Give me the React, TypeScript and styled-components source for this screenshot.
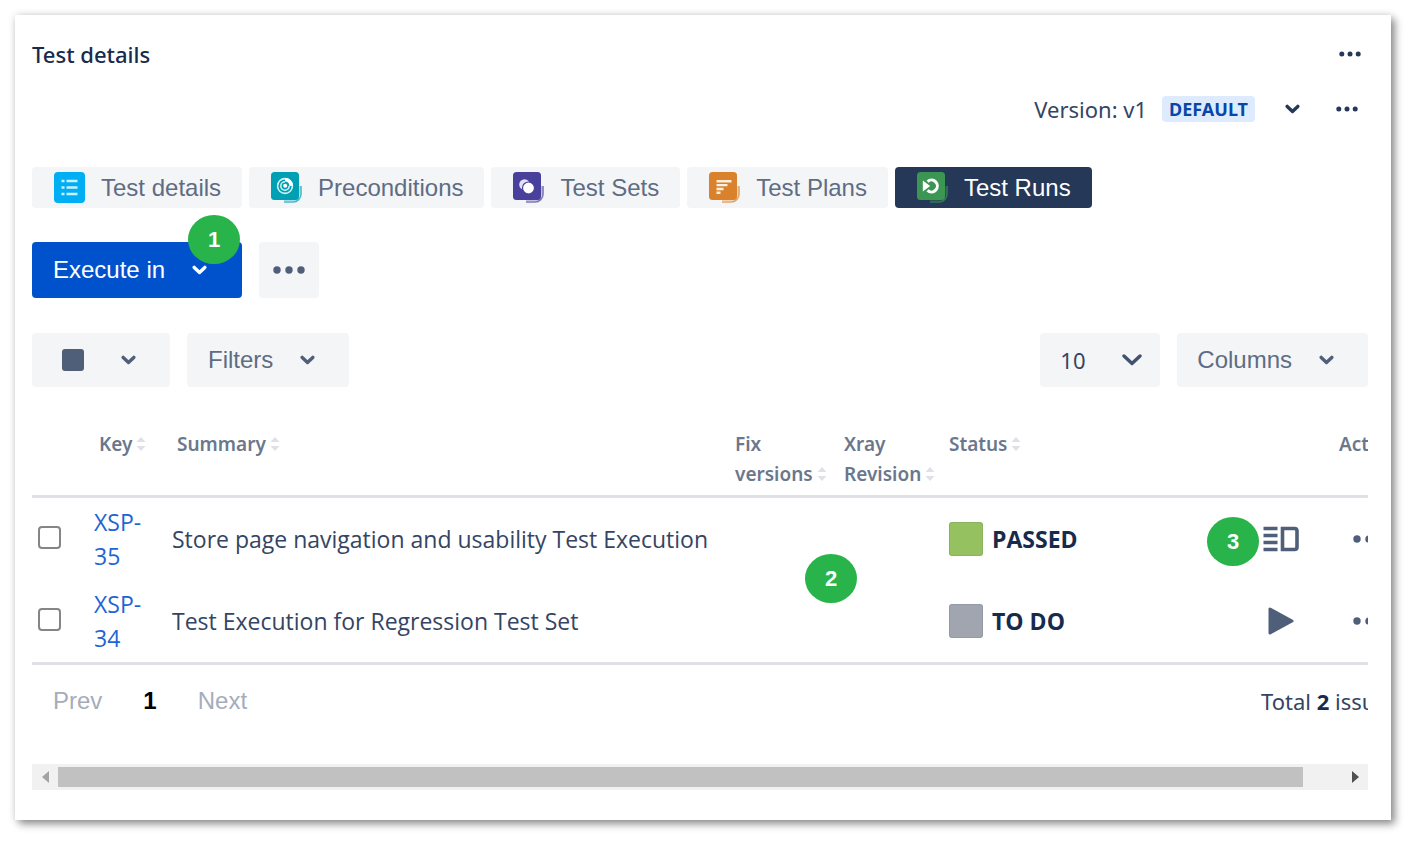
import React from "react";
import styled, { createGlobalStyle } from "styled-components";

const ui = `"Noto Sans", "Open Sans", sans-serif`;
const cell = `"Open Sans", "Noto Sans", sans-serif`;
const control = `"Liberation Sans", Arial, sans-serif`;

const GlobalStyle = createGlobalStyle`
  *, *::before, *::after { box-sizing: border-box; }
  body { margin: 0; background: #fff; font-family: ${ui}; color: #172b4d; }
  button, select { font-family: ${control}; }
  svg { display: block; flex: none; }
`;

const Page = styled.div`
  padding: 15px 25px 25px 15px;
`;

const Card = styled.main`
  padding: 23px 23px 30px 17px;
  background: #fff;
  box-shadow: 4px 4px 8px rgba(0, 0, 0, 0.42), 0 0 8px rgba(0, 0, 0, 0.12);
`;

const Header = styled.header`
  display: flex;
  align-items: center;
  justify-content: space-between;
  height: 32px;
  padding-right: 7px;
`;

const Title = styled.h1`
  margin: 0;
  font-size: 22px;
  line-height: 32px;
  font-weight: 500;
`;

const IconButton = styled.button`
  display: flex;
  align-items: center;
  justify-content: center;
  padding: 0;
  border: 0;
  background: none;
  color: #253858;
`;

const VersionRow = styled.div`
  display: flex;
  align-items: center;
  justify-content: flex-end;
  height: 32px;
  margin-top: 23px;
  padding-right: 10px;
`;

const VersionText = styled.span`
  font-size: 22px;
  line-height: 32px;
  color: #344563;
`;

const Lozenge = styled.span`
  margin: 0 30px 0 15px;
  padding: 0 7px;
  border-radius: 4px;
  background: #deebff;
  color: #0747a6;
  font-size: 18px;
  line-height: 26px;
  font-weight: 700;
`;

const VersionMore = styled(IconButton)`
  margin-left: 36px;
`;

const Tabs = styled.nav`
  display: flex;
  gap: 7px;
  margin-top: 42px;
`;

const Tab = styled.button<{ $active?: boolean }>`
  display: flex;
  align-items: center;
  gap: 16px;
  height: 41px;
  padding: 0 21px 0 22px;
  border: 0;
  border-radius: 4px;
  background: ${(p) => (p.$active ? "#253858" : "#f4f5f7")};
  color: ${(p) => (p.$active ? "#fff" : "#5e6c84")};
  font-size: 24px;
  white-space: nowrap;
`;

const ActionBar = styled.div`
  display: flex;
  gap: 17px;
  margin-top: 34px;
`;

const Anchor = styled.div`
  position: relative;
`;

const PrimaryButton = styled.button`
  display: flex;
  align-items: center;
  gap: 27px;
  height: 56px;
  padding: 0 35px 0 21px;
  border: 0;
  border-radius: 4px;
  background: #0052cc;
  color: #fff;
  font-size: 24px;
`;

const MoreButton = styled(IconButton)`
  width: 60px;
  height: 56px;
  border-radius: 4px;
  background: #f4f5f7;
  color: #505f79;
`;

const Marker = styled.span<{ $x: number; $y: number }>`
  position: absolute;
  z-index: 1;
  left: ${(p) => p.$x}px;
  top: ${(p) => p.$y}px;
  width: 52px;
  height: 49px;
  border-radius: 50%;
  background: #28b44b;
  color: #fff;
  font: 700 22px/49px ${control};
  text-align: center;
`;

const Toolbar = styled.div`
  display: flex;
  justify-content: space-between;
  margin-top: 35px;
`;

const Group = styled.div`
  display: flex;
  gap: 17px;
`;

const DropButton = styled.button<{ $inset?: number; $gap?: number }>`
  display: flex;
  align-items: center;
  gap: ${(p) => p.$gap ?? 27}px;
  height: 54px;
  padding: 0 34px 0 ${(p) => p.$inset ?? 21}px;
  border: 0;
  border-radius: 4px;
  background: #f4f5f7;
  color: #5e6c84;
  font-size: 24px;
  & > svg { color: #505f79; }
`;

const SelectBox = styled.label`
  display: grid;
  align-items: center;
  width: 120px;
  height: 54px;
  border-radius: 4px;
  background: #f4f5f7;
  color: #42526e;
  & > * { grid-area: 1 / 1; }
  & > svg { justify-self: end; margin-right: 18px; pointer-events: none; }
`;

const Select = styled.select`
  appearance: none;
  width: 100%;
  height: 54px;
  padding: 0 0 0 20px;
  border: 0;
  background: none;
  color: #344563;
  font-family: ${ui};
  font-size: 22px;
`;

const Scroller = styled.div`
  overflow: hidden;
  margin-top: 36px;
`;

const Wide = styled.div`
  position: relative;
  width: calc(100% + 39px);
`;

const Table = styled.table`
  width: 100%;
  table-layout: fixed;
  border-collapse: separate;
  border-spacing: 0;
  border-bottom: 3px solid #dfe1e6;
`;

const Col = styled.col<{ $w?: number }>`
  width: ${(p) => (p.$w ? `${p.$w}px` : "auto")};
`;

const Th = styled.th`
  padding: 6px 0 6px 17px;
  border-bottom: 3px solid #dfe1e6;
  color: #6b778c;
  font-size: 19px;
  line-height: 30px;
  font-weight: 600;
  text-align: left;
  vertical-align: top;
`;

const Td = styled.td<{ $inset?: number }>`
  height: 82px;
  padding: 0 0 0 ${(p) => p.$inset ?? 12}px;
  font-family: ${cell};
  font-size: 23px;
  line-height: 34px;
  color: #344563;
  vertical-align: middle;
`;

const SortMark = styled.svg`
  && { display: inline-block; margin-left: 4px; }
`;

const Nowrap = styled.span`
  white-space: nowrap;
`;

const Check = styled.input`
  appearance: none;
  display: block;
  width: 23px;
  height: 23px;
  margin: 0 0 3px;
  border: 2px solid #858585;
  border-radius: 4px;
  background: #fff;
`;

const KeyLink = styled.a`
  display: block;
  width: 52px;
  color: #1f64d4;
  text-decoration: none;
`;

const Status = styled.div`
  display: flex;
  align-items: center;
  gap: 9px;
  color: #172b4d;
  font-weight: 700;
`;

const Swatch = styled.span<{ $color: string }>`
  width: 34px;
  height: 34px;
  border-radius: 3px;
  background: ${(p) => p.$color};
  box-shadow: inset 0 0 0 1px rgba(9, 30, 66, 0.08);
`;

const RunCell = styled.div`
  position: relative;
  display: flex;
  justify-content: center;
`;

const RowButton = styled(IconButton)`
  color: #505f79;
`;

const Footer = styled.footer`
  display: flex;
  align-items: center;
  justify-content: space-between;
  height: 34px;
  margin-top: 19px;
  padding: 0 0 0 21px;
`;

const Pager = styled.div`
  display: flex;
  gap: 41px;
`;

const PageButton = styled.button<{ $current?: boolean }>`
  padding: 0;
  border: 0;
  background: none;
  font-size: 24px;
  font-weight: ${(p) => (p.$current ? 700 : 400)};
  color: ${(p) => (p.$current ? "#000" : "#a5adba")};
`;

const Total = styled.span`
  width: 146px;
  font-size: 22px;
  line-height: 32px;
  white-space: nowrap;
  color: #344563;
  strong { color: #172b4d; }
`;

const ScrollBar = styled.div`
  display: flex;
  align-items: center;
  height: 26px;
  margin-top: 46px;
  background: #f1f1f1;
`;

const ScrollArrow = styled.button`
  display: flex;
  align-items: center;
  justify-content: center;
  width: 26px;
  height: 26px;
  padding: 0;
  border: 0;
  background: none;
`;

const ScrollTrack = styled.div`
  flex: 1;
  height: 20px;
`;

const ScrollThumb = styled.div`
  width: 97%;
  height: 20px;
  background: #c1c1c1;
`;

const Chevron = ({ large }: { large?: boolean }) => (
  <svg width={large ? 20 : 15} height={large ? 12 : 10} viewBox={large ? "0 0 20 12" : "0 0 15 10"} fill="none" stroke="currentColor" strokeWidth="3.4" strokeLinecap="round" strokeLinejoin="round">
    <path d={large ? "M2 2l8 7.5L18 2" : "M2.2 2.4l5.3 5 5.3-5"} />
  </svg>
);

const Dots = ({ small }: { small?: boolean }) => (
  <svg width={small ? 22 : 32} height="8" viewBox={small ? "0 0 22 8" : "0 0 32 8"} fill="currentColor">
    {(small ? [2.8, 11, 19.2] : [4, 16, 28]).map((x) => (
      <circle key={x} cx={x} cy="4" r={small ? 2.5 : 3.7} />
    ))}
  </svg>
);

const Sort = () => (
  <SortMark width="10" height="14" viewBox="0 0 10 14" fill="#dfe1e6" aria-hidden="true">
    <path d="M5 0l4.5 5h-9zM5 14L.5 9h9z" />
  </SortMark>
);

const DetailsIcon = () => (
  <svg width="31" height="31" viewBox="0 0 31 31">
    <rect width="31" height="31" rx="4" fill="#00aef3" />
    <path d="M7.5 9h3M12.5 9h11M7.5 15.5h3M12.5 15.5h11M7.5 22h3M12.5 22h11" stroke="#c9f0ff" strokeWidth="2.6" />
  </svg>
);

const StackIcon = ({ color, children }: { color: string; children: React.ReactNode }) => (
  <svg width="31" height="31" viewBox="0 0 31 31" fill="none">
    <path d="M30 14v8a8 8 0 0 1-8 8h-9" stroke={color} strokeWidth="1.6" opacity=".7" />
    <path d="M28.3 14v7a7.3 7.3 0 0 1-7.3 7.3h-8" stroke={color} strokeWidth="1.6" opacity=".3" />
    <rect width="28" height="28" rx="3.5" fill={color} />
    {children}
  </svg>
);

const PreconditionIcon = () => (
  <StackIcon color="#00a0b4">
    <circle cx="14" cy="14" r="7.4" stroke="#d5f3f5" strokeWidth="1.6" />
    <path d="M14 6a8 8 0 0 1 8 8h-3.6a4.6 4.6 0 0 0-4.4-4.5z" fill="#fff" />
    <path d="M14 9.8a4.2 4.2 0 1 0 4.2 4.2" stroke="#d5f3f5" strokeWidth="1.5" />
    <circle cx="14.2" cy="13.8" r="2" fill="#fff" />
  </StackIcon>
);

const SetsIcon = () => (
  <StackIcon color="#49409c">
    <circle cx="11.5" cy="12.5" r="5.3" fill="#e4e1f5" />
    <circle cx="15.5" cy="16" r="6" fill="#fff" stroke="#49409c" strokeWidth="1.2" />
  </StackIcon>
);

const PlansIcon = () => (
  <StackIcon color="#d9822b">
    <path d="M7.5 9.3h15M7.5 13.1h11M7.5 17h7M7.5 20.8h4" stroke="#fdeedd" strokeWidth="2.4" />
  </StackIcon>
);

const RunsIcon = () => (
  <StackIcon color="#3b9654">
    <path d="M10.5 9.6a5.9 5.9 0 1 1 0 8.8" stroke="#fff" strokeWidth="3" />
    <path d="M5.8 8.6l7.4 5.4-7.4 5.4z" fill="#fff" />
  </StackIcon>
);

const ReportIcon = () => (
  <svg width="36" height="26" viewBox="0 0 36 26" fill="none" stroke="currentColor" strokeWidth="3.6">
    <path d="M.5 2.5h14M.5 9.5h14M.5 16.5h14M.5 23.5h14M19.5 2.5h12q2.5 0 2.500 2.500v16q0 2.500-2.500 2.500h-12z" />
  </svg>
);

const PlayIcon = () => (
  <svg width="26" height="28" viewBox="0 0 26 28" fill="currentColor" stroke="currentColor" strokeWidth="3" strokeLinejoin="round">
    <path d="M2 2v24l22-12z" />
  </svg>
);

const SquareIcon = () => (
  <svg width="22" height="22" viewBox="0 0 22 22" fill="#505f79">
    <rect width="22" height="22" rx="3" />
  </svg>
);

const tabs = [
  { label: "Test details", icon: <DetailsIcon /> },
  { label: "Preconditions", icon: <PreconditionIcon /> },
  { label: "Test Sets", icon: <SetsIcon /> },
  { label: "Test Plans", icon: <PlansIcon /> },
  { label: "Test Runs", icon: <RunsIcon />, active: true },
];

const rows = [
  { key: "XSP-35", summary: "Store page navigation and usability Test Execution", status: "PASSED", color: "#95c160", done: true },
  { key: "XSP-34", summary: "Test Execution for Regression Test Set", status: "TO DO", color: "#a0a5af", done: false },
];

export default function App() {
  return (
    <Page>
      <GlobalStyle />
      <Card>
        <Header>
          <Title>Test details</Title>
          <IconButton aria-label="Panel actions"><Dots small /></IconButton>
        </Header>
        <VersionRow>
          <VersionText>Version: v1</VersionText>
          <Lozenge>DEFAULT</Lozenge>
          <IconButton aria-label="Choose version"><Chevron /></IconButton>
          <VersionMore aria-label="Version actions"><Dots small /></VersionMore>
        </VersionRow>
        <Tabs>
          {tabs.map((t) => (
            <Tab key={t.label} $active={t.active}>{t.icon}{t.label}</Tab>
          ))}
        </Tabs>
        <ActionBar>
          <Anchor>
            <PrimaryButton>Execute in <Chevron /></PrimaryButton>
            <Marker $x={156} $y={-27}>1</Marker>
          </Anchor>
          <MoreButton aria-label="More actions"><Dots /></MoreButton>
        </ActionBar>
        <Toolbar>
          <Group>
            <DropButton $inset={30} $gap={37} aria-label="Select rows"><SquareIcon /><Chevron /></DropButton>
            <DropButton>Filters <Chevron /></DropButton>
          </Group>
          <Group>
            <SelectBox>
              <Select aria-label="Rows per page" defaultValue="10">
                <option>10</option>
                <option>25</option>
              </Select>
              <Chevron large />
            </SelectBox>
            <DropButton $inset={20}>Columns <Chevron /></DropButton>
          </Group>
        </Toolbar>
        <Scroller>
          <Wide>
            <Table>
              <colgroup>
                <Col $w={50} />
                <Col $w={78} />
                <Col />
                <Col $w={109} />
                <Col $w={105} />
                <Col $w={308} />
                <Col $w={82} />
                <Col $w={85} />
              </colgroup>
              <thead>
                <tr>
                  <Th />
                  <Th><Nowrap>Key<Sort /></Nowrap></Th>
                  <Th>Summary<Sort /></Th>
                  <Th>Fix <Nowrap>versions<Sort /></Nowrap></Th>
                  <Th>Xray <Nowrap>Revision<Sort /></Nowrap></Th>
                  <Th>Status<Sort /></Th>
                  <Th />
                  <Th>Actions</Th>
                </tr>
              </thead>
              <tbody>
                {rows.map((r) => (
                  <tr key={r.key}>
                    <Td $inset={6}><Check type="checkbox" aria-label={`Select ${r.key}`} /></Td>
                    <Td><KeyLink href="#">{r.key}</KeyLink></Td>
                    <Td><Nowrap>{r.summary}</Nowrap></Td>
                    <Td />
                    <Td />
                    <Td $inset={17}><Status><Swatch $color={r.color} />{r.status}</Status></Td>
                    <Td $inset={0}>
                      <RunCell>
                        {r.done && <Marker $x={-33} $y={-9}>3</Marker>}
                        <RowButton aria-label={r.done ? "Execution details" : "Run"}>{r.done ? <ReportIcon /> : <PlayIcon />}</RowButton>
                      </RunCell>
                    </Td>
                    <Td $inset={31}><RowButton aria-label="Row actions"><Dots /></RowButton></Td>
                  </tr>
                ))}
              </tbody>
            </Table>
            <Marker $x={773} $y={131}>2</Marker>
            <Footer>
              <Pager>
                <PageButton>Prev</PageButton>
                <PageButton $current>1</PageButton>
                <PageButton>Next</PageButton>
              </Pager>
              <Total>Total <strong>2</strong> issues</Total>
            </Footer>
          </Wide>
        </Scroller>
        <ScrollBar>
          <ScrollArrow aria-label="Scroll left"><svg width="7" height="12" viewBox="0 0 7 12" fill="#a3a3a3"><path d="M7 0v12L0 6z" /></svg></ScrollArrow>
          <ScrollTrack><ScrollThumb /></ScrollTrack>
          <ScrollArrow aria-label="Scroll right"><svg width="7" height="12" viewBox="0 0 7 12" fill="#505050"><path d="M0 0v12l7-6z" /></svg></ScrollArrow>
        </ScrollBar>
      </Card>
    </Page>
  );
}
